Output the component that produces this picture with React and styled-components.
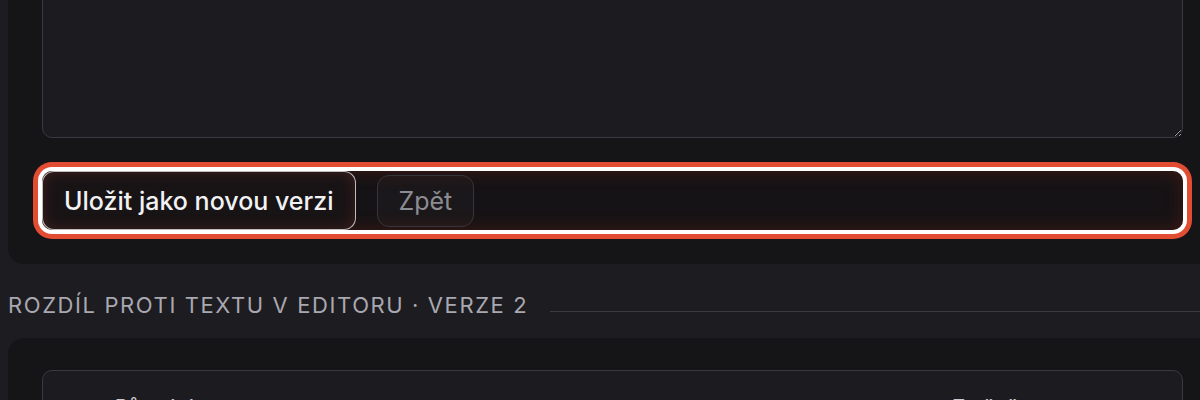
import React from 'react'
import styled, { createGlobalStyle } from 'styled-components'

const GlobalStyle = createGlobalStyle`
  html, body {
    margin: 0;
    padding: 0;
    background: #1d1c21;
    overflow: hidden;
    color-scheme: dark;
  }
  body {
    font-family: Inter, "Noto Sans", "Liberation Sans", sans-serif;
  }
`

const Page = styled.div`
  width: 1226px;
  padding: 0 0 0 8px;
  box-sizing: border-box;
`

const Card = styled.section`
  width: 1209px;
  box-sizing: border-box;
  background: #151417;
  border-radius: 16px;
  padding: ${p => p.padding || '34px'};
  margin-top: ${p => p.top || '0'};
`

const Editor = styled.textarea`
  display: block;
  width: 100%;
  height: 164px;
  box-sizing: border-box;
  background: #1c1b20;
  border: 1px solid #3b3a40;
  border-radius: 10px;
  color: #e8e8ea;
  font-family: inherit;
  font-size: 18px;
  padding: 14px 18px;
  outline: none;
  resize: vertical;
`

const ActionBar = styled.div`
  margin-top: 33px;
  height: 59px;
  display: flex;
  align-items: center;
  gap: 21px;
  background: #151315;
  border-radius: 10px;
  box-shadow:
    inset 0 0 18px rgba(120, 30, 22, 0.45),
    0 0 0 4px #ffffff,
    0 0 0 9px #e24c32;
`

const Button = styled.button`
  height: ${p => (p.primary ? '59px' : '52px')};
  padding: 0 21px;
  border-radius: 12px;
  font-family: inherit;
  font-size: 25px;
  font-weight: ${p => (p.primary ? 500 : 400)};
  color: ${p => (p.primary ? '#f2f2f4' : '#8d8c93')};
  background: ${p => (p.primary ? '#181416' : 'rgba(255,255,255,0.025)')};
  border: 1px solid ${p => (p.primary ? 'rgba(255,255,255,0.72)' : '#36353b')};
  box-shadow: ${p => (p.primary ? 'inset 0 0 14px rgba(140, 50, 40, 0.35)' : 'none')};
  cursor: pointer;
`

const SectionHead = styled.div`
  display: flex;
  align-items: flex-end;
  gap: 22px;
  margin: 28px 0 20px;
`

const SectionTitle = styled.h3`
  margin: 0;
  font-size: 22px;
  font-weight: 400;
  letter-spacing: 1.6px;
  text-transform: uppercase;
  color: #a9a8b0;
  white-space: nowrap;
  line-height: 26px;
`

const Rule = styled.div`
  flex: 1;
  height: 1px;
  background: #3b3a40;
  margin-bottom: 6px;
`

const DiffBox = styled.div`
  background: #1c1b20;
  border: 1px solid #3b3a40;
  border-radius: 10px;
  height: 200px;
  display: grid;
  grid-template-columns: 1fr 1fr;
  padding: 24px 0 0;
`

const ColHead = styled.div`
  font-size: 20px;
  font-weight: 500;
  color: #c9c8cf;
  padding-left: ${p => p.indent};
`

export default function App() {
  return (
    <>
      <GlobalStyle />
      <Page>
        <Card top="-60px">
          <Editor defaultValue="" />
          <ActionBar>
            <Button primary>Uložit jako novou verzi</Button>
            <Button>Zpět</Button>
          </ActionBar>
        </Card>
        <SectionHead>
          <SectionTitle>Rozdíl proti textu v editoru · verze 2</SectionTitle>
          <Rule />
        </SectionHead>
        <Card padding="32px 34px">
          <DiffBox>
            <ColHead indent="72px">Původní</ColHead>
            <ColHead indent="340px">Změněno</ColHead>
          </DiffBox>
        </Card>
      </Page>
    </>
  )
}
